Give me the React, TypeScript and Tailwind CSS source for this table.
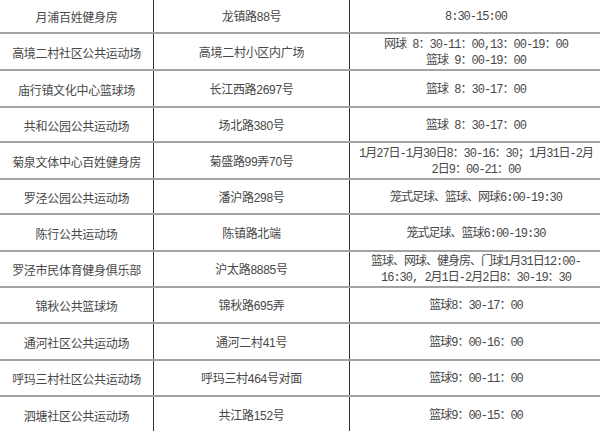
const rows: { name: string; addr: string; hours: string[]; h: string }[] = [
  { name: '月浦百姓健身房', addr: '龙镇路88号', hours: ['8:30-15:00'], h: 'h-[34px]' },
  { name: '高境二村社区公共运动场', addr: '高境二村小区内广场', hours: ['网球 8：30-11：00,13：00-19：00', '篮球 9：00-19：00'], h: 'h-[37px]' },
  { name: '庙行镇文化中心篮球场', addr: '长江西路2697号', hours: ['篮球 8：30-17：00'], h: 'h-[37px]' },
  { name: '共和公园公共运动场', addr: '场北路380号', hours: ['篮球 8：30-17：00'], h: 'h-[35px]' },
  { name: '菊泉文体中心百姓健身房', addr: '菊盛路99弄70号', hours: ['1月27日-1月30日8：30-16：30；1月31日-2月', '2日9：00-21：00'], h: 'h-[37px]' },
  { name: '罗泾公园公共运动场', addr: '潘沪路298号', hours: ['笼式足球、篮球、网球6:00-19:30'], h: 'h-[35px]' },
  { name: '陈行公共运动场', addr: '陈镇路北端', hours: ['笼式足球、篮球6:00-19:30'], h: 'h-[37px]' },
  { name: '罗泾市民体育健身俱乐部', addr: '沪太路8885号', hours: ['篮球、网球、健身房、门球1月31日12:00-', '16:30, 2月1日-2月2日8：30-19：30'], h: 'h-[36px]' },
  { name: '锦秋公共篮球场', addr: '锦秋路695弄', hours: ['篮球8：30-17：00'], h: 'h-[36px]' },
  { name: '通河社区公共运动场', addr: '通河二村41号', hours: ['篮球9：00-16：00'], h: 'h-[37px]' },
  { name: '呼玛三村社区公共运动场', addr: '呼玛三村464号对面', hours: ['篮球9：00-11：00'], h: 'h-[36px]' },
  { name: '泗塘社区公共运动场', addr: '共江路152号', hours: ['篮球9：00-15：00'], h: 'h-[36px]' },
]

export default function App() {
  return (
    <div className="h-[431px] w-[600px] overflow-hidden bg-white text-[#484848]">
      {rows.map((r, i) => (
        <div
          key={r.name}
          className={`grid grid-cols-[154px_196px_252px] ${r.h} ${i < rows.length - 1 ? 'border-b-2 border-[#a3a3a3]' : ''}`}
        >
          <div className="flex items-center justify-center border-r border-[#333] pt-[2px] font-['Noto_Sans_CJK_SC',sans-serif] text-[12px] tracking-[-0.3px]">
            {r.name}
          </div>
          <div className="flex items-center justify-center border-r border-[#333] pt-[2px] font-['Liberation_Sans','Noto_Sans_CJK_SC',sans-serif] text-[12px] tracking-[-0.3px]">
            {r.addr}
          </div>
          <div className="flex flex-col items-center justify-center pt-[2px] font-['Liberation_Mono','Noto_Sans_CJK_SC',monospace] text-[12px] leading-[16px] tracking-[-1px]">
            {r.hours.map((t) => (
              <div key={t} className="whitespace-nowrap">
                {t}
              </div>
            ))}
          </div>
        </div>
      ))}
    </div>
  )
}
